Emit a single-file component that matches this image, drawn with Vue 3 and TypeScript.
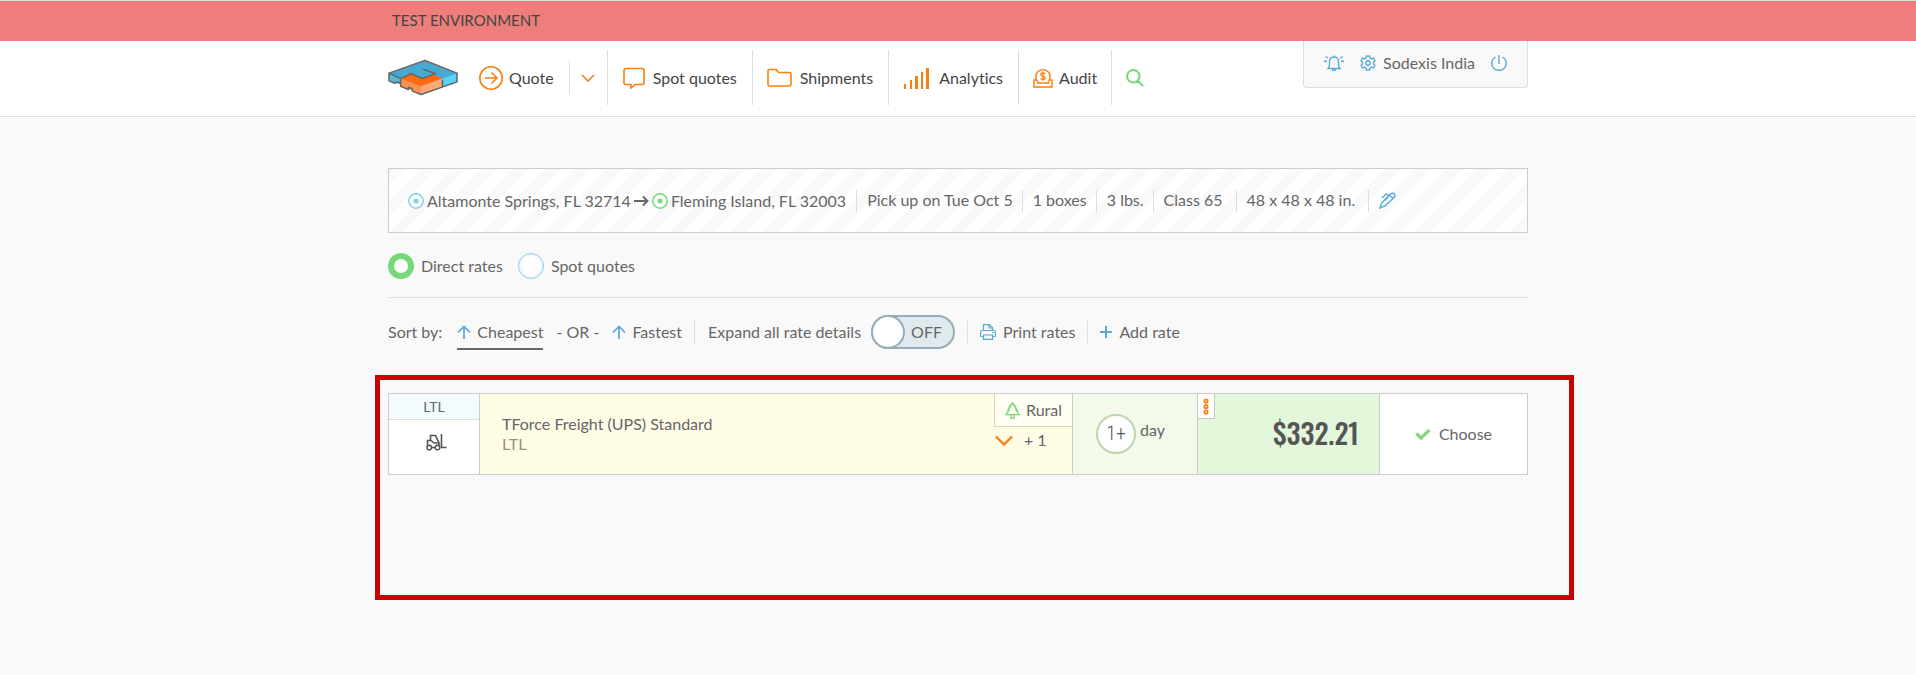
<script setup lang="ts">
import { ref } from 'vue'

const mode = ref<'direct' | 'spot'>('direct')
const expandAll = ref(false)
const quantities = ['Pick up on Tue Oct 5', '1 boxes', '3 lbs.']
const measures = ['Class 65', '48 x 48 x 48 in.']
</script>

<template>
  <div class="page">
    <div class="env"><div class="container env-text">TEST ENVIRONMENT</div></div>

    <header class="header">
      <div class="container bar">
        <a class="logo" href="#" aria-label="Home">
          <svg width="70" height="37" viewBox="0 0 72 38">
            <path d="M1 15 38 2 71 15V24L56 29 34 37 25 33V32L14 28V26L8 25 1 22Z" fill="#47a9d2" />
            <path d="M71 15V24L56 29V20Z" fill="#5bd3f5" />
            <path d="M13 20 24 15 35 20 46 16 56 20 34 28Z" fill="#ff6a0d" />
            <path d="M34 28 56 20V29L34 36Z" fill="#ffa876" />
            <path d="M13 20 34 28V36L25 33V31L21 30V32L13 28Z" fill="#ff8f50" />
            <path d="M1 15 13 20V26L8 24 1 22Z" fill="#58b9df" />
            <path d="M13 20 1 14.500 38 1.500 71 14.500V23.500L34 36.500 25 33V30.500L21 29V31.500L13 28V25L9 23.500 7 25 1 22.500V15M13 20 24 15 35 20 49 15 36 10.500M13 20V27M56 21V28" fill="none" stroke="#666" stroke-width="1.600" stroke-linejoin="round" />
          </svg>
        </a>
        <nav class="nav">
          <a class="item quote" href="#">
            <svg width="24" height="24" viewBox="0 0 24 24" class="orange"><circle cx="12" cy="12" r="11.200" /><path d="M6 12H17M12.500 6.500 18 12 12.500 17.500" /></svg>
            Quote
          </a>
          <button class="more" type="button" aria-label="More quote options">
            <svg width="14" height="8" viewBox="0 0 14 8" class="orange"><path d="M1 1 7 7 13 1" /></svg>
          </button>
          <a class="item" href="#">
            <svg width="22" height="22" viewBox="0 0 22 22" class="orange"><path d="M3 1.500H19Q21 1.500 21 3.500V15.500Q21 17.500 19 17.500H12L8 21V17.500H3Q1 17.500 1 15.500V3.500Q1 1.500 3 1.500Z" /></svg>
            Spot quotes
          </a>
          <a class="item folder" href="#">
            <svg width="25" height="20" viewBox="0 0 25 20" class="orange"><path d="M1 16V3Q1 1.500 2.500 1.500H8.500Q9.500 1.500 10 2.500L11 4Q11.500 4.500 12.500 4.500H22.500Q24 4.500 24 6V16.500Q24 18 22.500 18H2.500Q1 18 1 16.500Z" /></svg>
            Shipments
          </a>
          <a class="item wide" href="#">
            <svg width="25" height="22" viewBox="0 0 25 22"><path d="M0 17H2V22H0ZM6 13H8V22H6ZM11 9H14V22H11ZM17 5H19V22H17ZM22 1H25V22H22Z" fill="#f97f0f" /></svg>
            Analytics
          </a>
          <a class="item tight" href="#">
            <svg width="20" height="20" viewBox="0 0 20 20" class="orange"><path d="M3.500 13V12H1V19H19V12H16.500V13M4 15H16M5 14A7.200 7.200 0 1 1 15 14" stroke-width="1.400" /><path d="M12.300 6Q11.500 4.800 10 4.800 7.800 4.800 7.800 6.400 7.800 7.700 10 8 12.300 8.400 12.300 10 12.300 11.500 10 11.500 8.300 11.500 7.600 10.200M10 3.500V13" stroke-width="1.300" /></svg>
            Audit
          </a>
          <button class="search" type="button" aria-label="Search">
            <svg width="18" height="18" viewBox="0 0 18 18"><path d="M11.800 11.800 17 17M13.500 7.300A6.200 6.200 0 1 1 1.100 7.300 6.200 6.200 0 0 1 13.500 7.300Z" fill="none" stroke="#77d877" stroke-width="2" /></svg>
          </button>
        </nav>
        <div class="user">
          <button type="button" aria-label="Alerts">
            <svg width="20" height="16" viewBox="0 0 20 16" class="blue"><path d="M4 13.500H16Q14.500 12 14.500 9.500V6.500Q14.500 2 10 2 5.500 2 5.500 6.500V9.500Q5.500 12 4 13.500ZM10 .500V2M8 15.200H12M1.500 1.500 4 3M18.500 1.500 16 3M0 6.300H3M17 6.300H20" /></svg>
          </button>
          <a href="#" class="account">
            <svg width="16" height="16" viewBox="0 0 16 16" class="blue"><path d="M6.500 1H9.500L10 3 11.500 3.800 13.400 3 15 5.600 13.500 7V9L15 10.400 13.400 13 11.500 12.200 10 13 9.500 15H6.500L6 13 4.500 12.200 2.600 13 1 10.400 2.500 9V7L1 5.600 2.600 3 4.500 3.800 6 3Z" stroke-linejoin="round" /><circle cx="8" cy="8" r="2.200" /></svg>
            Sodexis India
          </a>
          <button type="button" aria-label="Sign out">
            <svg width="16" height="16" viewBox="0 0 16 16" class="blue"><path d="M8 0V9M4.500 2A7.200 7.200 0 1 0 11.500 2" /></svg>
          </button>
        </div>
      </div>
    </header>

    <main class="container main">
      <section class="summary">
        <div class="route">
          <svg width="16" height="16" viewBox="0 0 16 16"><circle cx="8" cy="8" r="7.200" fill="#fff" stroke="#7dd3ef" stroke-width="1.500" /><circle cx="8" cy="8" r="2.500" fill="#7dd3ef" /></svg>
          <span>Altamonte Springs, FL 32714</span>
          <svg width="15" height="12" viewBox="0 0 15 12"><path d="M0 6H13M9 1.500 13.500 6 9 10.500" fill="none" stroke="#666" stroke-width="1.800" /></svg>
          <svg width="16" height="16" viewBox="0 0 16 16"><circle cx="8" cy="8" r="7.200" fill="#fff" stroke="#77d877" stroke-width="1.500" /><circle cx="8" cy="8" r="2.500" fill="#77d877" /></svg>
          <span>Fleming Island, FL 32003</span>
        </div>
        <span v-for="q in quantities" :key="q" class="detail">{{ q }}</span>
        <span v-for="m in measures" :key="m" class="detail roomy">{{ m }}</span>
        <button class="detail" type="button" aria-label="Edit shipment">
          <svg width="17" height="17" viewBox="0 0 17 17" class="blue"><path d="M1 16 2.500 11 11.500 2Q13 .500 15 1.500 16.500 3 15.500 5L6 14ZM10.500 3 14 6.500M9.500 3.500Q7.500 1.500 6 3L3 6M6 8.500 9.500 4.500" /></svg>
        </button>
      </section>

      <div class="modes">
        <label class="radio"><input v-model="mode" type="radio" name="mode" value="direct" />Direct rates</label>
        <label class="radio"><input v-model="mode" type="radio" name="mode" value="spot" />Spot quotes</label>
      </div>

      <div class="tools">
        <span class="by">Sort by:</span>
        <button class="sort active" type="button">
          <svg width="14" height="14" viewBox="0 0 14 14" class="arrow"><path d="M7 14V1M1 7.500 7 1.500 13 7.500" /></svg>
          Cheapest
        </button>
        <span class="or">- OR -</span>
        <button class="sort" type="button">
          <svg width="14" height="14" viewBox="0 0 14 14" class="arrow"><path d="M7 14V1M1 7.500 7 1.500 13 7.500" /></svg>
          Fastest
        </button>
        <div class="expand">
          <label for="expand">Expand all rate details</label>
          <label class="toggle" :class="{ on: expandAll }">
            <input id="expand" v-model="expandAll" type="checkbox" />
            <span>{{ expandAll ? 'ON' : 'OFF' }}</span>
          </label>
        </div>
        <button class="tool" type="button">
          <svg width="16" height="16" viewBox="0 0 16 16" class="blue"><path d="M3.500 6V.700H9.500L12.500 3.500V6M9 .700V4H12.500M3.500 12.500H.700V7.500Q.700 6.500 1.700 6.500H14.300Q15.300 6.500 15.300 7.500V12.500H12.500M3.500 11H12.500V15.300H3.500ZM12 8.500H13.500" stroke-width="1.200" /></svg>
          Print rates
        </button>
        <button class="tool" type="button">
          <svg width="12" height="12" viewBox="0 0 12 12"><path d="M5 0H7V5H12V7H7V12H5V7H0V5H5Z" fill="#5aa9d2" /></svg>
          Add rate
        </button>
      </div>

      <section class="results">
        <article class="rate">
          <div class="kind">
            <div class="kind-name">LTL</div>
            <div class="kind-icon">
              <svg width="21" height="17" viewBox="0 0 21 17"><path d="M1.500 13V6.500H4.500V1.500H9.500L13 9V11.500M5 6.500 8 9H13M5.500 13.500H9M15.500 0V13.500H20.500" fill="none" stroke="#555" stroke-width="1.600" /><circle cx="3.300" cy="13.600" r="2.300" fill="#fff" stroke="#555" stroke-width="1.500" /><circle cx="11.500" cy="13.600" r="2.300" fill="#fff" stroke="#555" stroke-width="1.500" /></svg>
            </div>
          </div>
          <div class="carrier">
            <div>TForce Freight (UPS) Standard</div>
            <div class="service">LTL</div>
            <div class="extras">
              <div class="rural">
                <svg width="15" height="17" viewBox="0 0 15 17"><path d="M7.500 1 4.500 4.500H5.500L2.800 8.200H4L1 12.700H14L11 8.200H12.200L9.500 4.500H10.500ZM6 13V16H9V13" fill="none" stroke="#77d877" stroke-width="1.300" /></svg>
                Rural
              </div>
              <button class="plus-one" type="button">
                <svg width="18" height="11" viewBox="0 0 18 11" class="orange"><path d="M1 1.500 9 9.500 17 1.500" stroke-width="2.400" /></svg>
                + 1
              </button>
            </div>
          </div>
          <div class="transit"><span class="days">1+</span><span class="unit">day</span></div>
          <div class="price">
            <button class="dots" type="button" aria-label="Price details">
              <svg width="6" height="17" viewBox="0 0 6 17"><g fill="none" stroke="#f97f0f" stroke-width="1.700"><circle cx="3" cy="3" r="1.700" /><circle cx="3" cy="8.500" r="1.700" /><circle cx="3" cy="14" r="1.700" /></g></svg>
            </button>
            $332.21
          </div>
          <button class="choose" type="button">
            <svg width="16" height="12" viewBox="0 0 16 12"><path d="M1.500 5.500 6 10 14.500 2" fill="none" stroke="#8bd67f" stroke-width="3.400" /></svg>
            Choose
          </button>
        </article>
      </section>
    </main>
  </div>
</template>

<style>
body {
  background: #f9f9f9;
}
</style>

<style scoped>
* {
  box-sizing: border-box;
}
.page {
  font: 16px/20px Lato, "Open Sans", sans-serif;
  font-variant-ligatures: none;
  color: #666;
}
a {
  color: inherit;
  text-decoration: none;
}
button {
  display: flex;
  align-items: center;
  padding: 0;
  border: 0;
  background: none;
  font: inherit;
  color: inherit;
  cursor: pointer;
}
svg {
  display: block;
  flex: none;
}
.orange {
  fill: none;
  stroke: #f97f0f;
  stroke-width: 1.600;
}
.blue {
  fill: none;
  stroke: #5aa9d2;
  stroke-width: 1.400;
}
.arrow {
  fill: none;
  stroke: #5aa9d2;
  stroke-width: 1.700;
}
.container {
  max-width: 1140px;
  margin: 0 auto;
}
.env {
  border-top: 1px solid #ddd;
  background: #ed7e7b;
  color: #444;
}
.env-text {
  padding: 9px 4px 11px;
  font-size: 15px;
}
.header {
  background: #fff;
  border-bottom: 1px solid #ddd;
}
.bar {
  display: flex;
  align-items: center;
  height: 75px;
  padding-bottom: 2px;
}
.logo {
  margin-right: 21px;
}
.nav {
  display: flex;
  align-items: center;
  color: #444;
}
.item {
  display: flex;
  align-items: center;
  gap: 8px;
  height: 55px;
  padding: 0 15px;
  border-right: 1px solid #ddd;
}
.item.quote {
  gap: 6px;
  height: 33px;
  padding-left: 0;
}
.item.folder {
  padding-left: 14px;
}
.item.wide {
  gap: 10px;
}
.item.tight {
  gap: 6px;
  padding: 0 14px;
}
.more {
  height: 55px;
  padding: 0 12px 0 11px;
  border-right: 1px solid #ddd;
}
.search {
  padding: 0 14px;
}
.user {
  display: flex;
  align-items: center;
  align-self: flex-start;
  gap: 16px;
  height: 47px;
  margin-left: auto;
  padding: 0 20px 3px;
  border: 1px solid #ddd;
  border-top: 0;
  border-radius: 0 0 4px 4px;
  background: #f9f9f9;
}
.account {
  display: flex;
  align-items: center;
  gap: 7px;
}
.main {
  padding-top: 51px;
}
.summary {
  display: flex;
  align-items: center;
  height: 65px;
  padding: 0 19px;
  border: 1px solid #ccc;
  background: repeating-linear-gradient(135deg, #f9f9f9 0 11px, #fff 11px 22px);
}
.route {
  display: flex;
  align-items: center;
  gap: 3px;
  padding-right: 10px;
}
.detail {
  height: 22px;
  padding: 0 9px 0 10px;
  border-left: 1px solid #ddd;
}
.detail.roomy {
  padding-right: 13px;
}
.modes {
  display: flex;
  gap: 15px;
  padding: 20px 0 18px;
  border-bottom: 1px solid #ddd;
}
.radio {
  display: flex;
  align-items: center;
  gap: 7px;
}
.radio input {
  appearance: none;
  width: 26px;
  height: 26px;
  margin: 0;
  border: 1px solid #7dd3ef;
  border-radius: 50%;
  background: #fff;
  box-shadow: inset 0 0 4px #e4e4e4;
}
.radio input:checked {
  border: 6px solid #77d877;
  box-shadow: none;
}
.tools {
  display: flex;
  align-items: center;
  height: 36px;
  margin: 16px 0 25px;
}
.sort {
  gap: 6px;
  height: 36px;
  border-bottom: 2px solid transparent;
  padding-top: 2px;
}
.sort.active {
  border-bottom-color: #666;
}
.by {
  padding-right: 15px;
}
.or {
  padding: 0 13px;
}
.expand {
  display: flex;
  align-items: center;
  gap: 10px;
  margin: 0 12px;
}
.expand::before {
  content: "";
  width: 1px;
  height: 24px;
  margin-right: 3px;
  background: #ddd;
}
.toggle {
  display: flex;
  align-items: center;
  gap: 6px;
  width: 84px;
  height: 34px;
  border: 2px solid #98adba;
  border-radius: 17px;
  background: #e0e9ee;
}
.toggle input {
  appearance: none;
  flex: none;
  width: 34px;
  height: 34px;
  margin: 0 0 0 -2px;
  border: 2px solid #98adba;
  border-radius: 50%;
  background: #fff;
}
.toggle.on {
  flex-direction: row-reverse;
}
.toggle.on input {
  margin: 0 -2px 0 0;
}
.tool {
  gap: 7px;
  height: 22px;
  padding: 0 12px;
  border-left: 1px solid #ddd;
}
.results {
  min-height: 225px;
  margin: 0 -46px 0 -13px;
  padding: 13px 41px 13px 8px;
  border: 5px solid #c00;
}
.rate {
  display: grid;
  grid-template-columns: 91px 1fr 125px 182px 147px;
  height: 82px;
  border: 1px solid #ccc;
  background: #fff;
}
.rate > * {
  position: relative;
  border-right: 1px solid #ccc;
}
.rate > :last-child {
  border-right: 0;
}
.kind-name {
  height: 26px;
  border-bottom: 1px solid #ddd;
  background: #f3fbff;
  font-size: 14px;
  line-height: 26px;
  text-align: center;
}
.kind-icon {
  display: flex;
  justify-content: center;
  padding: 14px 0 0 4px;
}
.carrier {
  padding: 20px 22px;
  background: #fffce6;
}
.service {
  color: #98907a;
}
.extras {
  position: absolute;
  top: 0;
  right: 0;
}
.rural {
  display: flex;
  align-items: center;
  gap: 6px;
  height: 33px;
  padding: 0 10px;
  border: 1px solid #ddd5b8;
  border-width: 0 0 1px 1px;
  background: #fffef3;
}
.plus-one {
  gap: 11px;
  padding: 3px 1px;
}
.transit {
  display: flex;
  align-items: center;
  gap: 4px;
  padding-left: 23px;
  background: #f3faea;
}
.days {
  width: 40px;
  height: 40px;
  border: 2px solid #bdd5ae;
  border-radius: 50%;
  background: #fff;
  color: #555;
  font: 300 20px/34px "Roboto Condensed", Roboto, sans-serif;
  text-align: center;
}
.unit {
  padding-bottom: 8px;
}
.price {
  display: flex;
  align-items: center;
  justify-content: flex-end;
  padding: 0 20px 3px 0;
  background: #e3f7da;
  color: #555;
  font: 500 28px/40px Oswald, "Roboto Condensed", Roboto, sans-serif;
}
.dots {
  position: absolute;
  top: 0;
  left: 0;
  justify-content: center;
  width: 17px;
  height: 25px;
  border: 1px solid #c3cfbd;
  border-width: 0 1px 1px 0;
  background: #fff;
}
.choose {
  justify-content: center;
  gap: 8px;
}
</style>
